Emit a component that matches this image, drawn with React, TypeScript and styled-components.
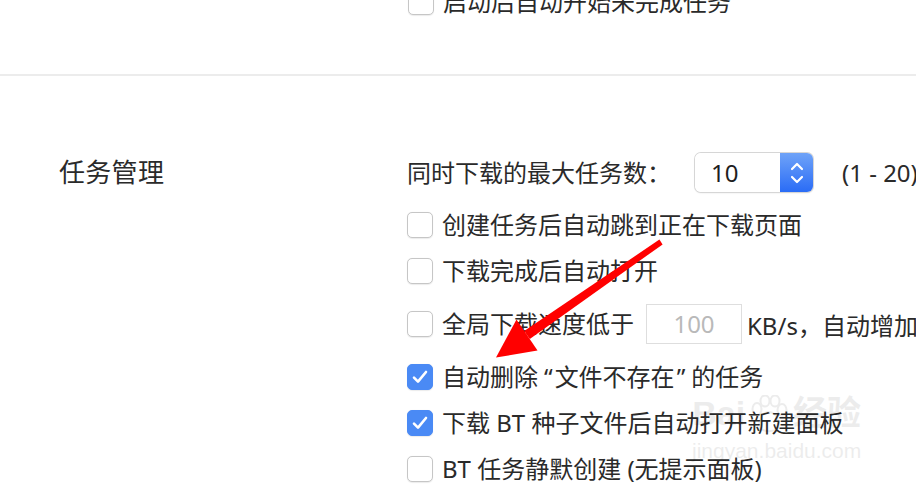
import React from 'react'
import styled, { createGlobalStyle } from 'styled-components'

const GlobalStyle = createGlobalStyle`
  html, body {
    margin: 0;
    padding: 0;
    background: #ffffff;
    overflow: hidden;
  }
  body {
    font-family: "Noto Sans", "Noto Sans CJK SC", sans-serif;
    color: #2a2a2a;
  }
`

interface CheckProps {
  checked?: boolean
}

const CheckBox = ({ checked }: CheckProps) => (
  <Box $checked={!!checked}>
    {checked && (
      <svg width="20" height="20" viewBox="0 0 20 20">
        <path d="M4 10.6 L8 14.6 L16 5" fill="none" stroke="#fff" strokeWidth="2.6" strokeLinecap="round" strokeLinejoin="round" />
      </svg>
    )}
  </Box>
)

const App = () => {
  return (
    <Page>
      <GlobalStyle />
      <TopSection>
        <TopRow>
          <CheckBox />
          <Label>启动后自动开始未完成任务</Label>
        </TopRow>
      </TopSection>
      <Divider />
      <Section>
        <SectionTitle>任务管理</SectionTitle>
        <Rows>
          <Row>
            <Label>同时下载的最大任务数：</Label>
            <Stepper>
              <StepperValue>10</StepperValue>
              <StepperButton>
                <svg width="16" height="26" viewBox="0 0 16 26">
                  <path d="M3 9 L8 4 L13 9" fill="none" stroke="#fff" strokeWidth="2.2" strokeLinecap="round" strokeLinejoin="round" />
                  <path d="M3 17 L8 22 L13 17" fill="none" stroke="#fff" strokeWidth="2.2" strokeLinecap="round" strokeLinejoin="round" />
                </svg>
              </StepperButton>
            </Stepper>
            <Range>(1 - 20)</Range>
          </Row>
          <Row>
            <CheckBox />
            <Label>创建任务后自动跳到正在下载页面</Label>
          </Row>
          <Row>
            <CheckBox />
            <Label>下载完成后自动打开</Label>
          </Row>
          <Row>
            <CheckBox />
            <Label>全局下载速度低于</Label>
            <SpeedInput>100</SpeedInput>
            <Unit>KB/s，自动增加任务数</Unit>
          </Row>
          <Row>
            <CheckBox checked />
            <Label>
              自动删除<Quote $open>“</Quote>文件不存在<Quote>”</Quote>的任务
            </Label>
          </Row>
          <Row>
            <CheckBox checked />
            <Label>下载 BT 种子文件后自动打开新建面板</Label>
          </Row>
          <Row>
            <CheckBox />
            <Label>BT 任务静默创建 (无提示面板)</Label>
          </Row>
        </Rows>
      </Section>

      <Watermark>
        <WatermarkLogo>
          <span>Bai</span>
          <svg width="40" height="38" viewBox="0 0 40 38">
            <g fill="none" stroke="#000" strokeWidth="2">
              <ellipse cx="8" cy="14" rx="4.5" ry="6" />
              <ellipse cx="16" cy="6" rx="4.5" ry="5.5" />
              <ellipse cx="26" cy="6" rx="4.5" ry="5.5" />
              <ellipse cx="33" cy="15" rx="4.5" ry="6" />
              <path d="M20 17 C12 17 8 30 12 34 C16 37 24 37 28 34 C32 30 28 17 20 17 Z" />
            </g>
          </svg>
          <span>经验</span>
        </WatermarkLogo>
        <WatermarkUrl>jingyan.baidu.com</WatermarkUrl>
      </Watermark>

      <ArrowLayer width="916" height="484" viewBox="0 0 916 484">
        <polygon points="662.6,244.4 659.4,239.6 524.2,331 529.8,339" fill="#ff0000" />
        <polygon points="496,357.5 516.5,319.5 537.5,350.5" fill="#ff0000" />
      </ArrowLayer>
    </Page>
  )
}

export default App

const Page = styled.div`
  position: relative;
  width: 916px;
  height: 484px;
  overflow: hidden;
  background: #fff;
`

const TopSection = styled.div`
  display: flow-root;
  height: 74px;
  padding-left: 408px;
  box-sizing: border-box;
`

const TopRow = styled.div`
  display: flex;
  align-items: center;
  height: 26px;
  margin-top: -11px;
  white-space: nowrap;
`

const Divider = styled.div`
  height: 2px;
  background: #ececec;
`

const Section = styled.div`
  display: grid;
  grid-template-columns: 348px 1fr;
  padding: 77px 0 0 59px;
`

const SectionTitle = styled.div`
  font-size: 26px;
  line-height: 39px;
  color: #2a2a2a;
  letter-spacing: 0.3px;
`

const Rows = styled.div`
  display: flex;
  flex-direction: column;
  gap: 20px;
`

const Row = styled.div`
  display: flex;
  align-items: center;
  white-space: nowrap;
  min-height: 26px;
`

const Box = styled.div<{ $checked: boolean }>`
  flex: none;
  width: 26px;
  height: 26px;
  box-sizing: border-box;
  border-radius: 5px;
  display: flex;
  align-items: center;
  justify-content: center;
  margin-right: 9px;
  background: ${p => (p.$checked ? '#4a8af5' : '#ffffff')};
  border: 1px solid ${p => (p.$checked ? '#4a8af5' : '#c6c6c6')};
  box-shadow: 0 0.5px 1px rgba(0, 0, 0, 0.08);
`

const Label = styled.span`
  font-size: 24px;
  line-height: 26px;
  color: #2a2a2a;
`

const Quote = styled.span<{ $open?: boolean }>`
  margin: ${p => (p.$open ? '0 2px 0 6px' : '0 6px 0 2px')};
`

const Stepper = styled.div`
  display: flex;
  height: 39px;
  margin-left: 24px;
  border-radius: 6px;
  box-shadow: 0 0 0 1px #d6d6d6, 0 1px 2px rgba(0, 0, 0, 0.12);
  overflow: hidden;
`

const StepperValue = styled.div`
  width: 85px;
  box-sizing: border-box;
  padding-left: 16px;
  font-size: 24px;
  line-height: 39px;
  color: #1e1e1e;
  background: #fff;
`

const StepperButton = styled.div`
  width: 33px;
  display: flex;
  align-items: center;
  justify-content: center;
  background: linear-gradient(#6fa3f8, #2a6cf6);
`

const Range = styled.span`
  margin-left: 29px;
  font-size: 24px;
  color: #2a2a2a;
`

const SpeedInput = styled.div`
  width: 96px;
  height: 40px;
  box-sizing: border-box;
  margin: 0 5px 0 12px;
  border: 1px solid #dedede;
  color: #b9b9b9;
  font-size: 24px;
  line-height: 38px;
  text-align: center;
`

const Unit = styled.span`
  font-size: 24px;
  color: #2a2a2a;
`

const Watermark = styled.div`
  position: absolute;
  left: 692px;
  top: 393px;
  display: flex;
  flex-direction: column;
  align-items: center;
  opacity: 0.07;
  pointer-events: none;
`

const WatermarkLogo = styled.div`
  display: flex;
  align-items: flex-end;
  gap: 4px;
  font-size: 34px;
  line-height: 40px;
  font-family: "Liberation Sans", "Noto Sans CJK SC", sans-serif;
  font-weight: 700;
  color: #000;
`

const WatermarkUrl = styled.div`
  font-family: "Liberation Sans", sans-serif;
  font-size: 21px;
  color: #000;
  margin-top: 6px;
`

const ArrowLayer = styled.svg`
  position: absolute;
  left: 0;
  top: 0;
  pointer-events: none;
`
